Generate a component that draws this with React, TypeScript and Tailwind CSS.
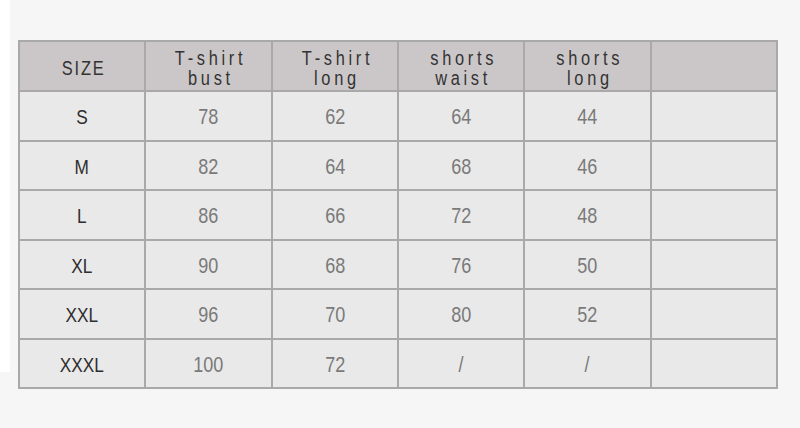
import React from "react";

const headers: string[][] = [
  ["SIZE"],
  ["T-shirt", "bust"],
  ["T-shirt", "long"],
  ["shorts", "waist"],
  ["shorts", "long"],
  [],
];

const rows: string[][] = [
  ["S", "78", "62", "64", "44", ""],
  ["M", "82", "64", "68", "46", ""],
  ["L", "86", "66", "72", "48", ""],
  ["XL", "90", "68", "76", "50", ""],
  ["XXL", "96", "70", "80", "52", ""],
  ["XXXL", "100", "72", "/", "/", ""],
];

export default function App() {
  return (
    <div
      className="flex w-[800px] h-[428px] bg-[#f6f6f6] overflow-hidden"
      style={{ fontFamily: '"Liberation Sans", Arial, sans-serif' }}
    >
      <div className="w-[10px] h-[372px] bg-white shrink-0" />
      <div className="pl-[8px] pt-[40px]">
        <table className="table-fixed border-collapse w-[760px] h-[349px] border-2 border-[#a9a9a9]">
          <thead>
            <tr className="h-[50px] bg-[#cbc7c8]">
              {headers.map((h, i) => (
                <th
                  key={i}
                  className="border-2 border-[#a9a9a9] font-normal text-[#333333] text-[20px] leading-[20px] text-center align-middle pt-[3px]"
                >
                  {h.map((line, j) => (
                    <div key={j}>
                      <span
                        className={`inline-block scale-x-[0.82] ${
                          i === 0
                            ? "tracking-[2.2px] mr-[-2.2px]"
                            : "tracking-[4.5px] mr-[-4.5px]"
                        }`}
                      >
                        {line}
                      </span>
                    </div>
                  ))}
                </th>
              ))}
            </tr>
          </thead>
          <tbody>
            {rows.map((r, ri) => (
              <tr key={ri} className="bg-[#e9e9e9]">
                {r.map((c, ci) => (
                  <td
                    key={ci}
                    className={`border-2 border-[#a9a9a9] text-center align-middle pt-[2px] ${
                      ci === 0
                        ? "text-[21px] text-[#2e2e2e]"
                        : "text-[22px] text-[#7a7a7a]"
                    }`}
                  >
                    <span className="inline-block scale-x-[0.82]">{c}</span>
                  </td>
                ))}
              </tr>
            ))}
          </tbody>
        </table>
      </div>
    </div>
  );
}
